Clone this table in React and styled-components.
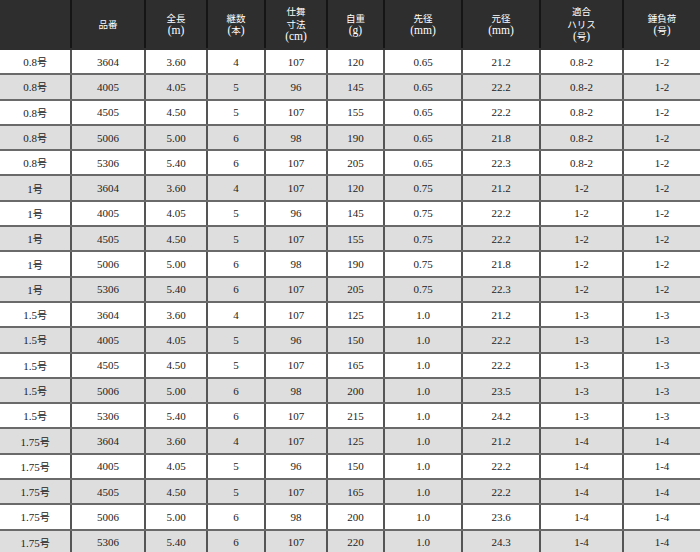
import styled, { createGlobalStyle } from 'styled-components';

const GlobalStyle = createGlobalStyle`
  html, body {
    margin: 0;
    padding: 0;
    background: #fff;
  }
  body {
    font-family: "Liberation Serif", "Noto Sans CJK JP", serif;
    overflow: hidden;
  }
`;

const SpecTable = styled.table`
  width: 700px;
  border-collapse: collapse;
  table-layout: fixed;
  color: #222;
  font-size: 11px;
`;

const HeadCell = styled.th`
  height: 48px;
  padding: 0;
  background-color: #2e2e2e;
  color: #fff;
  font-weight: normal;
  font-size: 11.5px;
  line-height: 12.5px;
  text-align: center;
  vertical-align: middle;
  border-left: 2px solid #151515;
  border-bottom: 2px solid #2e2e2e;
  white-space: pre-line;

  &:first-child {
    border-left: none;
  }
`;

const Row = styled.tr`
  height: 25.3px;
  background-color: ${(p) => (p.$shaded ? '#dedede' : '#ffffff')};
`;

const Cell = styled.td`
  padding: 0;
  text-align: center;
  vertical-align: middle;
  border-left: 2px solid #555;
  border-bottom: 2px solid #6a6a6a;

  &:first-child {
    border-left: none;
  }
`;

// japanese glyphs sit a bit smaller than the serif digits
const Jp = styled.span`
  font-family: "Noto Sans CJK JP", sans-serif;
  font-size: ${(p) => p.$size || '10px'};
`;

const splitJp = (text, size) =>
  text.split(/([\u3040-\u30ff\u4e00-\u9fff]+)/).map((part, i) =>
    i % 2 === 1 ? (
      <Jp key={i} $size={size}>
        {part}
      </Jp>
    ) : (
      part
    )
  );

const widths = [71, 74, 62, 58, 62, 57, 78, 78, 83, 77];

const headers = [
  '',
  '品番',
  '全長\n(m)',
  '継数\n(本)',
  '仕舞\n寸法\n(cm)',
  '自重\n(g)',
  '先径\n(mm)',
  '元径\n(mm)',
  '適合\nハリス\n(号)',
  '錘負荷\n(号)',
];

const codes = ['3604', '4005', '4505', '5006', '5306'];
const lengths = ['3.60', '4.05', '4.50', '5.00', '5.40'];
const pieces = ['4', '5', '5', '6', '6'];
const closed = ['107', '96', '107', '98', '107'];

const groups = [
  {
    size: '0.8号',
    weight: ['120', '145', '155', '190', '205'],
    tip: '0.65',
    butt: ['21.2', '22.2', '22.2', '21.8', '22.3'],
    line: '0.8-2',
    sinker: '1-2',
  },
  {
    size: '1号',
    weight: ['120', '145', '155', '190', '205'],
    tip: '0.75',
    butt: ['21.2', '22.2', '22.2', '21.8', '22.3'],
    line: '1-2',
    sinker: '1-2',
  },
  {
    size: '1.5号',
    weight: ['125', '150', '165', '200', '215'],
    tip: '1.0',
    butt: ['21.2', '22.2', '22.2', '23.5', '24.2'],
    line: '1-3',
    sinker: '1-3',
  },
  {
    size: '1.75号',
    weight: ['125', '150', '165', '200', '220'],
    tip: '1.0',
    butt: ['21.2', '22.2', '22.2', '23.6', '24.3'],
    line: '1-4',
    sinker: '1-4',
  },
];

const rows = groups.flatMap((g) =>
  codes.map((code, i) => [
    g.size,
    code,
    lengths[i],
    pieces[i],
    closed[i],
    g.weight[i],
    g.tip,
    g.butt[i],
    g.line,
    g.sinker,
  ])
);

export default function App() {
  return (
    <>
      <GlobalStyle />
      <SpecTable>
        <colgroup>
          {widths.map((w, i) => (
            <col key={i} style={{ width: w }} />
          ))}
        </colgroup>
        <thead>
          <tr>
            {headers.map((h, i) => (
              <HeadCell key={i}>{splitJp(h, '9.5px')}</HeadCell>
            ))}
          </tr>
        </thead>
        <tbody>
          {rows.map((r, i) => (
            <Row key={i} $shaded={i % 2 === 1}>
              {r.map((v, j) => (
                <Cell key={j}>{splitJp(v)}</Cell>
              ))}
            </Row>
          ))}
        </tbody>
      </SpecTable>
    </>
  );
}
